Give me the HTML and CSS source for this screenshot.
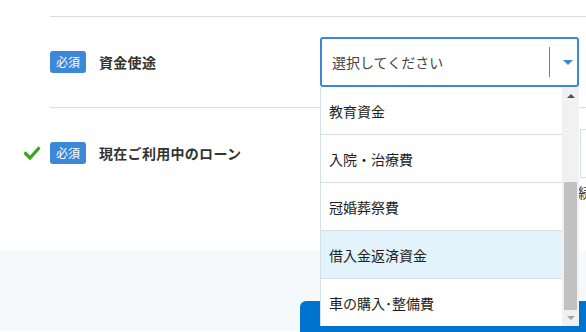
FILE: index.html
```html
<!DOCTYPE html>
<html lang="ja">
<head>
<meta charset="utf-8">
<link rel="stylesheet" href="styles.css">
</head>
<body>
<div class="form">
  <div class="row row-first">
    <div class="label-col">
      <span class="badge">必須</span>
      <span class="label">資金使途</span>
    </div>
    <div class="select-wrap">
      <div class="select">
        <span class="placeholder">選択してください</span>
        <span class="sep"></span>
        <span class="caret"></span>
      </div>
      <div class="dropdown">
        <ul class="options">
          <li>教育資金</li>
          <li>入院・治療費</li>
          <li>冠婚葬祭費</li>
          <li class="hover">借入金返済資金</li>
          <li>車の購入･整備費</li>
        </ul>
        <div class="scrollbar">
          <span class="arrow-up"></span>
          <span class="thumb"></span>
          <span class="arrow-down"></span>
        </div>
      </div>
    </div>
  </div>
  <div class="row row-second">
    <div class="label-col">
      <svg class="check" width="16" height="14" viewBox="0 0 16 14"><path d="M1.5 7.5 L6 12 L14.5 2.5" fill="none" stroke="#3aa61c" stroke-width="3.2" stroke-linecap="square"/></svg>
      <span class="badge">必須</span>
      <span class="label">現在ご利用中のローン</span>
    </div>
    <div class="loan-opts">
      <div class="opt-box"></div>
      <div class="opt-text">続柄</div>
    </div>
  </div>
</div>
<div class="footer">
  <div class="button"></div>
</div>
</body>
</html>
```
FILE: styles.css
```css
* { box-sizing: border-box; }
html, body { margin: 0; padding: 0; }
body {
  width: 586px;
  height: 332px;
  overflow: hidden;
  background: #fff;
  font-family: "Noto Sans CJK JP", "Noto Sans", sans-serif;
  color: #333;
}
.form {
  padding-top: 16px;
  margin-left: 50px;
}
.row {
  display: flex;
  border-top: 1px solid #dddddd;
}
.row-first {
  height: 91px;
  align-items: center;
}
.row-second {
  height: 144px;
  align-items: flex-start;
  padding-top: 34px;
}
.label-col {
  position: relative;
  width: 270px;
  display: flex;
  align-items: center;
  flex-shrink: 0;
}
.check {
  position: absolute;
  left: -26px;
  top: 4px;
}
.badge {
  display: inline-flex;
  align-items: center;
  justify-content: center;
  width: 36px;
  height: 22px;
  background: #3b87d8;
  color: #fff;
  border-radius: 3px;
  font-size: 12px;
  line-height: 1;
}
.label {
  margin-left: 13px;
  font-size: 14px;
  font-weight: bold;
  color: #333;
  letter-spacing: 0.3px;
}
.select-wrap {
  position: relative;
  width: 259px;
}
.select {
  height: 50px;
  border: 2px solid #3b87d8;
  border-radius: 3px;
  display: flex;
  align-items: center;
  padding-left: 10px;
  background: #fff;
}
.placeholder {
  flex: 1;
  font-size: 14px;
  color: #444;
}
.sep {
  width: 1px;
  height: 30px;
  background: #3b87d8;
}
.caret {
  width: 0;
  height: 0;
  border-left: 5px solid transparent;
  border-right: 5px solid transparent;
  border-top: 5px solid #3b87d8;
  margin: 0 4px 0 13px;
}
.dropdown {
  position: absolute;
  left: 0;
  top: 50px;
  width: 259px;
  height: 239px;
  background: #fff;
  border-left: 1px solid #d3e1eb;
  display: flex;
  z-index: 5;
}
.options {
  list-style: none;
  margin: 0;
  padding: 0;
  flex: 1;
}
.options li {
  height: 48px;
  border-bottom: 1px solid #d0dfea;
  display: flex;
  align-items: center;
  padding-left: 8px;
  font-size: 14px;
  color: #1e1e1e;
}
.options li:last-child { border-bottom: none; height: 47px; }
.options li.hover { background: #e2f3fb; }
.scrollbar {
  width: 17px;
  background: #f1f1f1;
  display: flex;
  flex-direction: column;
  align-items: center;
}
.arrow-up {
  margin-top: 7px;
  width: 0; height: 0;
  border-left: 4px solid transparent;
  border-right: 4px solid transparent;
  border-bottom: 4px solid #505050;
}
.thumb {
  margin-top: 84px;
  width: 13px;
  height: 128px;
  background: #c1c1c1;
}
.arrow-down {
  margin-top: 6px;
  width: 0; height: 0;
  border-left: 4px solid transparent;
  border-right: 4px solid transparent;
  border-top: 4px solid #a3a3a3;
}
.loan-opts {
  margin-left: 260px;
  margin-top: -13px;
  width: 200px;
  flex-shrink: 0;
}
.opt-box {
  height: 49px;
  border: 1px solid #cfe0ec;
}
.opt-text {
  font-size: 14px;
  margin-top: 4px;
  margin-left: -2px;
}
.footer {
  height: 80px;
  background: #f5f9fc;
  padding-top: 50px;
  padding-left: 300px;
}
.button {
  width: 300px;
  height: 40px;
  background: #0073cf;
  border-radius: 6px 6px 0 0;
}
```
